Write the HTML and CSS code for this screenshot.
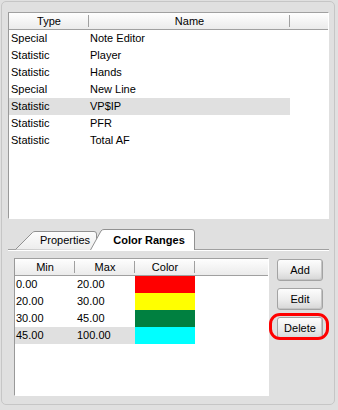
FILE: index.html
```html
<!DOCTYPE html>
<html lang="en">
<head>
    <meta charset="UTF-8">
    <title>Color Ranges</title>
    <link rel="stylesheet" href="styles.css">
</head>
<body>

    <div class="frame">
        <div class="grid fields">
            <div class="grid-head">
                <div class="head-cell col-type">Type</div>
                <div class="head-cell col-name">Name</div>
            </div>
            <div class="row"><div class="col-type">Special</div><div class="col-name">Note Editor</div></div>
            <div class="row"><div class="col-type">Statistic</div><div class="col-name">Player</div></div>
            <div class="row"><div class="col-type">Statistic</div><div class="col-name">Hands</div></div>
            <div class="row"><div class="col-type">Special</div><div class="col-name">New Line</div></div>
            <div class="row selected"><div class="col-type">Statistic</div><div class="col-name">VP$IP</div></div>
            <div class="row"><div class="col-type">Statistic</div><div class="col-name">PFR</div></div>
            <div class="row"><div class="col-type">Statistic</div><div class="col-name">Total AF</div></div>
        </div>

        <div class="tabs">
            <div class="tab tab-props">
                <svg class="tab-shape" width="83" height="19" viewBox="0 0 83 19">
                    <defs>
                        <linearGradient id="tabFill" x1="0" y1="0" x2="0" y2="1">
                            <stop offset="0" stop-color="#fdfdfd"/>
                            <stop offset="1" stop-color="#ececec"/>
                        </linearGradient>
                    </defs>
                    <path d="M0.5 18.5 L17.5 1.5 Q18.5 0.5 20 0.5 H79 Q81.5 0.5 81.5 3 V19" fill="url(#tabFill)" stroke="#919191"/>
                </svg>
                <span>Properties</span>
            </div>
            <div class="tab tab-ranges">
                <svg class="tab-shape" width="106" height="21" viewBox="0 0 106 21">
                    <path d="M0.5 21 L11 2 Q12 0.5 14 0.5 H102 Q104.5 0.5 104.5 3 V21" fill="#fff" stroke="#919191"/>
                </svg>
                <span>Color Ranges</span>
            </div>
        </div>

        <div class="tab-page">
            <div class="grid ranges">
                <div class="grid-head">
                    <div class="head-cell col-min">Min</div>
                    <div class="head-cell col-max">Max</div>
                    <div class="head-cell col-color">Color</div>
                </div>
                <div class="row"><div class="col-min">0.00</div><div class="col-max">20.00</div><div class="col-color sw-red"></div></div>
                <div class="row"><div class="col-min">20.00</div><div class="col-max">30.00</div><div class="col-color sw-yellow"></div></div>
                <div class="row"><div class="col-min">30.00</div><div class="col-max">45.00</div><div class="col-color sw-green"></div></div>
                <div class="row selected"><div class="col-min">45.00</div><div class="col-max">100.00</div><div class="col-color sw-cyan"></div></div>
            </div>

            <div class="actions">
                <button>Add</button>
                <button>Edit</button>
                <div class="marked"><button>Delete</button></div>
            </div>
        </div>
    </div>

</body>
</html>
```

FILE: styles.css
```css
* {
    box-sizing: border-box;
}
body {
    margin: 0;
    background: #e0e0e0;
    font-family: "Liberation Sans", Arial, sans-serif;
    font-size: 11px;
    color: #000;
}
.frame {
    margin: 1px 3px 0 1px;
    height: 404px;
    border: 1px solid #c6c6c6;
    border-radius: 5px;
    padding: 10px 0 0 6px;
}

/* list views */
.grid {
    background: #fff;
    border-top: 1px solid #a0a0a0;
    border-left: 1px solid #999;
    border-right: 1px solid #fff;
    border-bottom: 1px solid #fff;
}
.fields {
    width: 321px;
    height: 207px;
}
.ranges {
    width: 255px;
    height: 138px;
}
.grid-head {
    display: flex;
    height: 17px;
    border-bottom: 1px solid #a0a0a0;
    background: linear-gradient(#fefefe, #ebebeb);
}
.head-cell {
    position: relative;
    text-align: center;
    line-height: 17px;
}
.head-cell::after {
    content: "";
    position: absolute;
    right: 0;
    top: 2px;
    height: 12px;
    width: 1px;
    background: #a0a0a0;
}
.row {
    display: flex;
    height: 17px;
    line-height: 17px;
    white-space: nowrap;
}
.row.selected .col-type,
.row.selected .col-name,
.row.selected .col-min,
.row.selected .col-max {
    background: #e0e0e0;
}
.col-type {
    width: 80px;
}
.col-name {
    width: 201px;
}
.row .col-type {
    padding-left: 2px;
}
.row .col-name {
    padding-left: 1px;
}
.col-min, .col-max, .col-color {
    width: 60px;
}
.row .col-min {
    padding-left: 1px;
}
.row .col-max {
    padding-left: 2px;
}
.sw-red { background: #ff0000; }
.sw-yellow { background: #ffff00; }
.sw-green { background: #008040; }
.sw-cyan { background: #00ffff; }

/* tabs */
.tabs {
    display: flex;
    align-items: flex-end;
    width: 321px;
    height: 21px;
    margin-top: 10px;
    border-bottom: 1px solid #a0a0a0;
}
.tab {
    position: relative;
}
.tab-shape {
    position: absolute;
    top: 0;
    overflow: visible;
}
.tab span {
    position: relative;
    display: block;
    text-align: center;
    line-height: 18px;
}
.tab-props {
    width: 64px;
    height: 18px;
    margin-left: 25px;
}
.tab-props .tab-shape {
    left: -18px;
}
.tab-ranges {
    z-index: 1;
    width: 92px;
    height: 21px;
    margin-left: 6px;
    margin-bottom: -1px;
    padding-top: 2px;
    font-weight: bold;
}
.tab-ranges .tab-shape {
    left: -13px;
}
.tab-page {
    display: flex;
    gap: 8px;
    width: 321px;
    border-top: 1px solid #fff;
    padding: 7px 0 0 6px;
}

/* buttons */
.actions {
    display: flex;
    flex-direction: column;
    gap: 7px;
    padding-top: 1px;
}
button {
    display: block;
    width: 46px;
    height: 22px;
    padding: 0;
    border: 1px solid #a3a3a3;
    border-radius: 3px;
    background: linear-gradient(#fdfdfd, #ececec 55%, #d6d6d6);
    box-shadow: inset -1px -1px 0 #c4c4c4;
    font: inherit;
    color: #000;
}
.marked {
    position: relative;
}
.marked::after {
    content: "";
    position: absolute;
    left: -8px;
    right: -6px;
    top: -4px;
    bottom: -1px;
    border: 3.5px solid #ff0000;
    border-radius: 11px;
}
```
